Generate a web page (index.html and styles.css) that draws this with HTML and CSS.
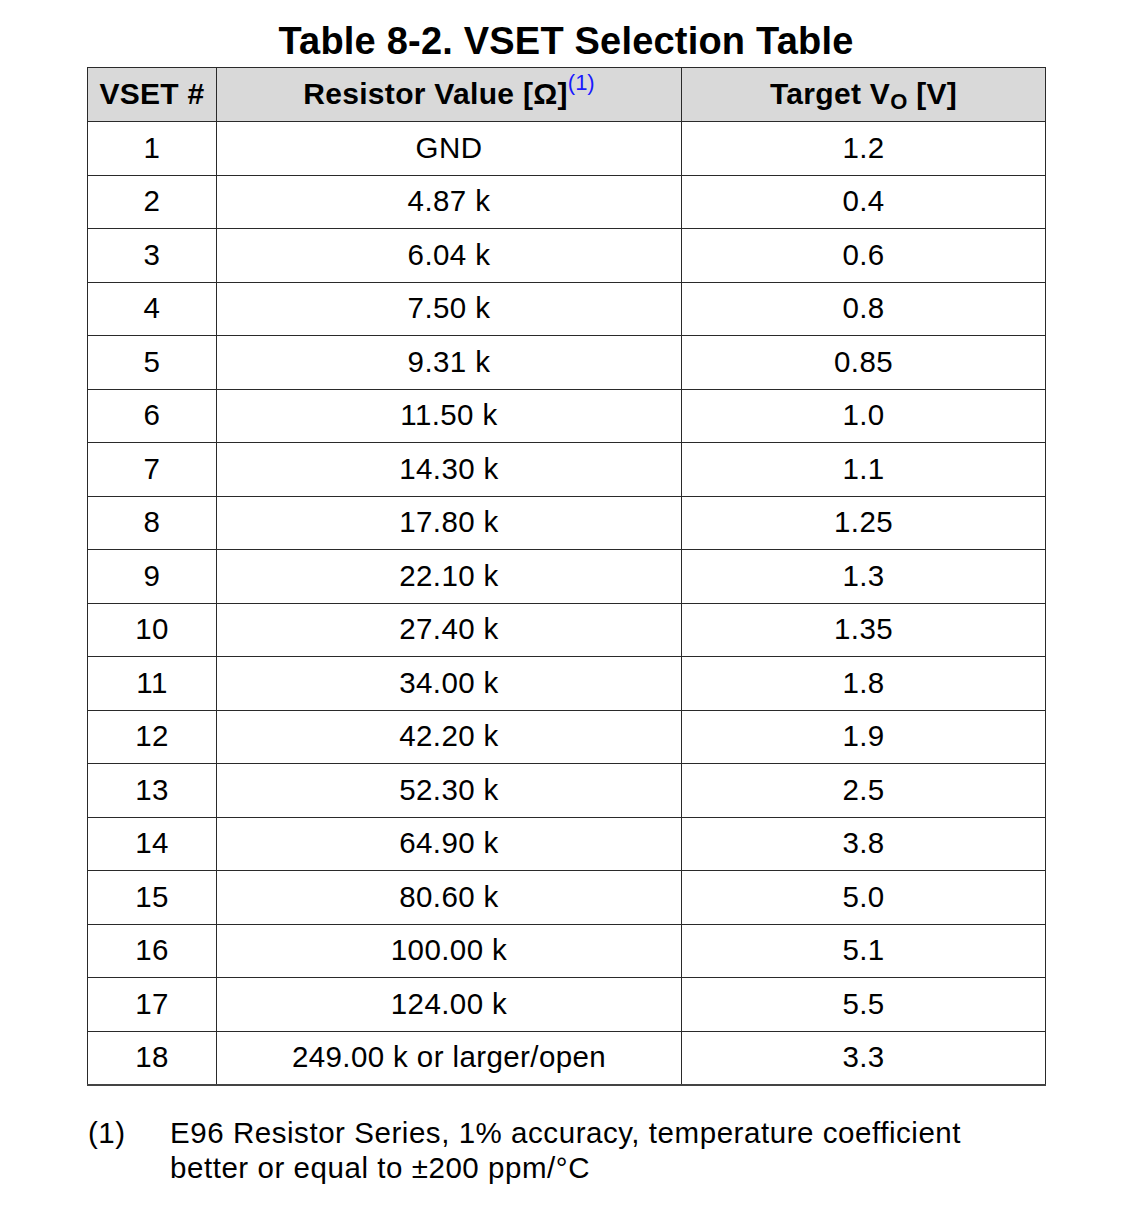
FILE: index.html
```html
<!DOCTYPE html>
<html lang="en">
<head>
<meta charset="utf-8">
<title>Table 8-2. VSET Selection Table</title>
<link rel="stylesheet" href="styles.css">
</head>
<body>
<div class="page">
  <h1 class="title">Table 8-2. VSET Selection Table</h1>
  <table class="vset">
    <colgroup>
      <col class="c1"><col class="c2"><col class="c3">
    </colgroup>
    <thead>
      <tr>
        <th>VSET #</th>
        <th>Resistor Value [Ω]<sup class="fn">(1)</sup></th>
        <th>Target V<sub class="sub">O</sub> [V]</th>
      </tr>
    </thead>
    <tbody>
      <tr><td>1</td><td>GND</td><td>1.2</td></tr>
      <tr><td>2</td><td>4.87 k</td><td>0.4</td></tr>
      <tr><td>3</td><td>6.04 k</td><td>0.6</td></tr>
      <tr><td>4</td><td>7.50 k</td><td>0.8</td></tr>
      <tr><td>5</td><td>9.31 k</td><td>0.85</td></tr>
      <tr><td>6</td><td>11.50 k</td><td>1.0</td></tr>
      <tr><td>7</td><td>14.30 k</td><td>1.1</td></tr>
      <tr><td>8</td><td>17.80 k</td><td>1.25</td></tr>
      <tr><td>9</td><td>22.10 k</td><td>1.3</td></tr>
      <tr><td>10</td><td>27.40 k</td><td>1.35</td></tr>
      <tr><td>11</td><td>34.00 k</td><td>1.8</td></tr>
      <tr><td>12</td><td>42.20 k</td><td>1.9</td></tr>
      <tr><td>13</td><td>52.30 k</td><td>2.5</td></tr>
      <tr><td>14</td><td>64.90 k</td><td>3.8</td></tr>
      <tr><td>15</td><td>80.60 k</td><td>5.0</td></tr>
      <tr><td>16</td><td>100.00 k</td><td>5.1</td></tr>
      <tr><td>17</td><td>124.00 k</td><td>5.5</td></tr>
      <tr><td>18</td><td>249.00 k or larger/open</td><td>3.3</td></tr>
    </tbody>
  </table>
  <div class="note">
    <span class="note-num">(1)</span>
    <p class="note-text">E96 Resistor Series, 1% accuracy, temperature coefficient better or equal to ±200 ppm/°C</p>
  </div>
</div>
</body>
</html>
```
FILE: styles.css
```css
html, body {
  margin: 0;
  padding: 0;
  background: #ffffff;
}
body {
  font-family: "Liberation Sans", Arial, sans-serif;
  color: #000000;
}
.page {
  width: 958px;
  margin-left: 87px;
  padding-top: 19px;
}
.title {
  margin: 0 0 4px 0;
  font-size: 38px;
  letter-spacing: 0.2px;
  line-height: 44px;
  font-weight: bold;
  text-align: center;
}
.vset {
  width: 958px;
  border-collapse: collapse;
  table-layout: fixed;
  font-size: 29.5px;
  letter-spacing: 0.4px;
}
.c1 { width: 129px; }
.c2 { width: 465px; }
.c3 { width: 364px; }
.vset th,
.vset td {
  border: 1px solid #2a2a2a;
  padding: 0 0 1px 0;
  text-align: center;
  vertical-align: middle;
  line-height: 32px;
}
.vset th {
  background: #d9d9d9;
  font-weight: bold;
  font-size: 30px;
  letter-spacing: 0.3px;
  height: 52px;
}
.vset td {
  height: 51.5px;
}
.vset tbody tr:last-child td {
  border-bottom: 2px solid #444444;
}
.fn {
  color: #1a1aff;
  font-weight: normal;
  font-size: 22px;
  letter-spacing: 0;
  line-height: 0;
  vertical-align: 14px;
}
.sub {
  font-size: 22px;
  line-height: 0;
  vertical-align: -5px;
}
.note {
  display: flex;
  margin-top: 29px;
  font-size: 29.5px;
  letter-spacing: 0.55px;
  line-height: 35px;
}
.note-num {
  width: 82px;
  flex: none;
  padding-left: 1px;
}
.note-text {
  margin: 0;
  width: 820px;
}
```
